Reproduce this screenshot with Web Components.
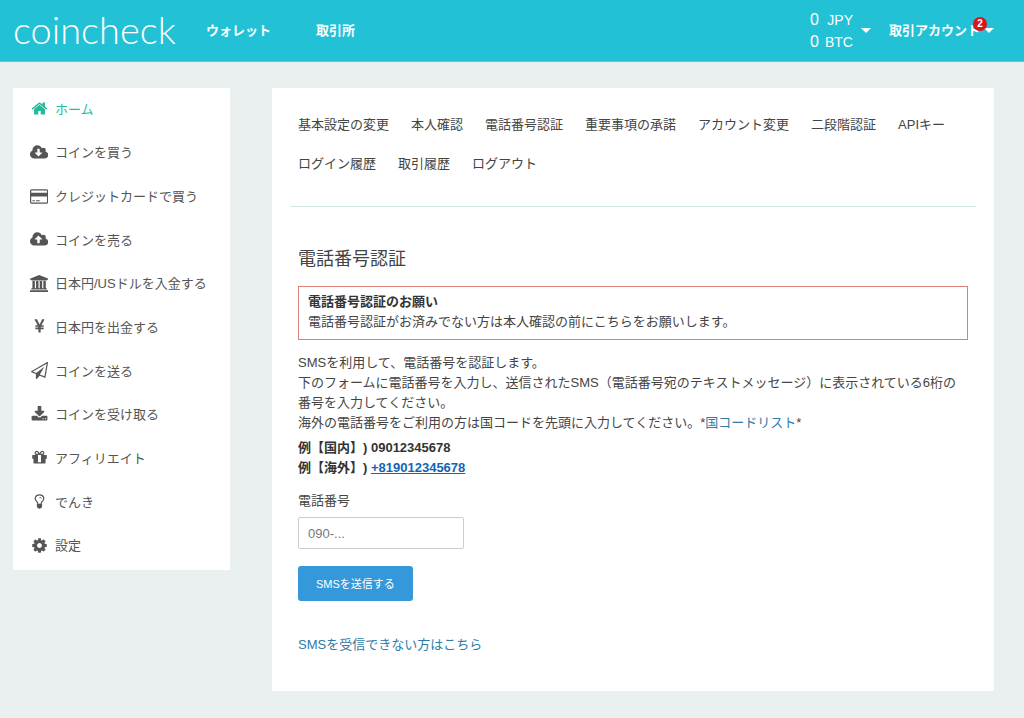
<!DOCTYPE html>
<html lang="ja">
<head>
<meta charset="utf-8">
<meta name="viewport" content="width=device-width, initial-scale=1">
<title>電話番号認証 | coincheck</title>
<style>
  *, *::before, *::after { box-sizing: border-box; }
  body {
    margin: 0;
    min-height: 100vh;
    background: #eaeff0;
    color: #444;
    font: 13px/20px "Liberation Sans", "Noto Sans CJK JP", sans-serif;
    text-spacing-trim: space-all;
  }
</style>
</head>
<body>
<cc-app>
  <cc-header slot="header">
    <cc-nav-link href="#wallet">ウォレット</cc-nav-link>
    <cc-nav-link href="#exchange">取引所</cc-nav-link>
    <cc-balance slot="tools"></cc-balance>
    <cc-account slot="tools" count="2">取引アカウント</cc-account>
  </cc-header>

  <cc-sidebar slot="sidebar">
    <cc-side-item icon="home" active>ホーム</cc-side-item>
    <cc-side-item icon="cloud-down">コインを買う</cc-side-item>
    <cc-side-item icon="card">クレジットカードで買う</cc-side-item>
    <cc-side-item icon="cloud-up">コインを売る</cc-side-item>
    <cc-side-item icon="bank">日本円/USドルを入金する</cc-side-item>
    <cc-side-item icon="yen">日本円を出金する</cc-side-item>
    <cc-side-item icon="plane">コインを送る</cc-side-item>
    <cc-side-item icon="download">コインを受け取る</cc-side-item>
    <cc-side-item icon="gift">アフィリエイト</cc-side-item>
    <cc-side-item icon="bulb">でんき</cc-side-item>
    <cc-side-item icon="cog">設定</cc-side-item>
  </cc-sidebar>

  <cc-panel>
    <cc-tabs slot="tabs"></cc-tabs>
    <span slot="title">電話番号認証</span>
    <cc-notice>
      <span slot="title">電話番号認証のお願い</span>
      電話番号認証がお済みでない方は本人確認の前にこちらをお願いします。
    </cc-notice>
    <cc-guide></cc-guide>
    <cc-phone-form></cc-phone-form>
  </cc-panel>
</cc-app>

<script>
  const ICONS = {
    "home": [1792, "M1472 992v480q0 26-19 45t-45 19h-384v-384h-256v384h-384q-26 0-45-19t-19-45v-480q0-1 .5-3t.5-3l575-474 575 474q1 2 1 6zm223-69l-62 74q-8 9-21 11h-3q-13 0-21-7l-692-577-692 577q-12 8-24 7-13-2-21-11l-62-74q-8-10-7-23.5t11-21.5l719-599q32-26 76-26t76 26l244 204v-195q0-14 9-23t23-9h192q14 0 23 9t9 23v408l219 182q10 8 11 21.5t-7 23.5z"],
    "cloud-down": [1920, "M1280 928q0-14-9-23t-23-9h-224v-352q0-13-9.5-22.5t-22.5-9.5h-192q-13 0-22.5 9.5t-9.5 22.5v352h-224q-13 0-22.5 9.5t-9.5 22.5q0 14 9 23l352 352q9 9 23 9t23-9l351-351q10-12 10-24zm640 224q0 159-112.5 271.5t-271.5 112.5h-1088q-185 0-316.5-131.5t-131.5-316.5q0-130 70-240t188-165q-2-30-2-43 0-212 150-362t362-150q156 0 285.5 87t188.5 231q71-62 166-62 106 0 181 75t75 181q0 76-41 138 130 31 213.5 135.5t83.5 238.5z"],
    "cloud-up": [1920, "M1280 864q0-14-9-23l-352-352q-9-9-23-9t-23 9l-351 351q-10 12-10 24 0 14 9 23t23 9h224v352q0 13 9.5 22.5t22.5 9.5h192q13 0 22.5-9.5t9.5-22.5v-352h224q13 0 22.5-9.5t9.5-22.5zm640 288q0 159-112.5 271.5t-271.5 112.5h-1088q-185 0-316.5-131.5t-131.5-316.5q0-130 70-240t188-165q-2-30-2-43 0-212 150-362t362-150q156 0 285.5 87t188.5 231q71-62 166-62 106 0 181 75t75 181q0 76-41 138 130 31 213.5 135.5t83.5 238.5z"],
    "card": [1920, "M1760 128q66 0 113 47t47 113v1216q0 66-47 113t-113 47h-1600q-66 0-113-47t-47-113v-1216q0-66 47-113t113-47h1600zm-1600 128q-13 0-22.5 9.5t-9.5 22.5v224h1664v-224q0-13-9.5-22.5t-22.5-9.5h-1600zm1600 1280q13 0 22.5-9.5t9.5-22.5v-608h-1664v608q0 13 9.5 22.5t22.5 9.5h1600zm-1504-128v-128h256v128h-256zm384 0v-128h384v128h-384z"],
    "bank": [1920, "M960 0l960 384v128h-128q0 26-20.5 45t-48.5 19h-1526q-28 0-48.5-19t-20.5-45h-128v-128zm-704 640h256v768h128v-768h256v768h128v-768h256v768h128v-768h256v768h59q28 0 48.5 19t20.5 45v64h-1664v-64q0-26 20.5-45t48.5-19h59v-768zm1595 960q28 0 48.5 19t20.5 45v128h-1920v-128q0-26 20.5-45t48.5-19h1782z"],
    "yen": [1792, "M985.5 1536h-172q-13 0-22.5-9t-9.5-23v-330h-288q-13 0-22.5-9t-9.5-23v-103q0-13 9.5-22.5t22.5-9.5h288v-85h-288q-13 0-22.5-9t-9.5-23v-104q0-13 9.5-22.5t22.5-9.5h214l-321-578q-8-16 0-32 10-16 28-16h194q19 0 29 18l215 425q19 38 56 125 10-24 30.5-68t27.5-61l191-420q8-19 29-19h191q17 0 27 16 9 14 1 31l-313 579h215q13 0 22.5 9.5t9.5 22.5v104q0 14-9.5 23t-22.5 9h-290v85h290q13 0 22.5 9.5t9.5 22.5v103q0 14-9.5 23t-22.5 9h-290v330q0 13-9.5 22.5t-22.5 9.5z"],
    "plane": [1792, "M1764 11q33 24 27 64l-256 1536q-5 29-32 45-14 8-31 8-11 0-24-5l-527-215-298 327q-18 21-47 21-14 0-23-4-19-7-30-23.5t-11-36.5v-452l-472-193q-37-14-40-55-3-39 32-59l1664-960q35-21 68 2zm-342 1499l221-1323-1434 827 336 137 863-639-478 797z"],
    "download": [1792, "M1344 1344q0-26-19-45t-45-19-45 19-19 45 19 45 45 19 45-19 19-45zm256 0q0-26-19-45t-45-19-45 19-19 45 19 45 45 19 45-19 19-45zm128-224v320q0 40-28 68t-68 28h-1472q-40 0-68-28t-28-68v-320q0-40 28-68t68-28h465l135 136q58 56 136 56t136-56l136-136h464q40 0 68 28t28 68zm-325-569q17 41-14 70l-448 448q-18 19-45 19t-45-19l-448-448q-31-29-14-70 17-39 59-39h256v-448q0-26 19-45t45-19h256q26 0 45 19t19 45v448h256q42 0 59 39z"],
    "gift": [1792, "M1056 1356v-716h-320v716q0 25 18 38.5t46 13.5h192q28 0 46-13.5t18-38.5zm-456-844h195l-126-161q-26-31-69-31-40 0-68 28t-28 68 28 68 68 28zm688-96q0-40-28-68t-68-28q-43 0-69 31l-125 161h194q40 0 68-28t28-68zm376 256v320q0 14-9 23t-23 9h-96v416q0 40-28 68t-68 28h-1088q-40 0-68-28t-28-68v-416h-96q-14 0-23-9t-9-23v-320q0-14 9-23t23-9h440q-93 0-158.5-65.5t-65.5-158.5 65.5-158.5 158.5-65.5q107 0 168 77l128 165 128-165q61-77 168-77 93 0 158.5 65.5t65.5 158.5-65.5 158.5-158.5 65.5h440q14 0 23 9t9 23z"],
    "bulb": [1792, "M1120 576q0 13-9.5 22.5t-22.5 9.5-22.5-9.5-9.5-22.5q0-46-54-71t-106-25q-13 0-22.5-9.5t-9.5-22.5 9.5-22.5 22.5-9.5q50 0 99.5 16t87 54 37.5 90zm160 0q0-72-34.5-134t-90-101.5-123-62-136.5-22.5-136.5 22.5-123 62-90 101.5-34.5 134q0 101 68 180 10 11 30.5 33t30.5 33q128 153 141 298h228q13-145 141-298 10-11 30.5-33t30.5-33q68-79 68-180zm128 0q0 155-103 268-45 49-74.5 87t-59.5 95.5-34 107.5q47 28 47 82 0 37-25 64 25 27 25 64 0 52-45 81 13 23 13 47 0 46-31.5 71t-77.5 25q-20 44-60 70t-87 26-87-26-60-70q-46 0-77.5-25t-31.5-71q0-24 13-47-45-29-45-81 0-37 25-64-25-27-25-64 0-54 47-82-4-50-34-107.5t-59.5-95.5-74.5-87q-103-113-103-268 0-99 44.5-184.5t117-142 164-89 186.5-32.5 186.5 32.5 164 89 117 142 44.5 184.5z"],
    "cog": [1792, "M1152 896q0-106-75-181t-181-75-181 75-75 181 75 181 181 75 181-75 75-181zm512-109v222q0 12-8 23t-20 13l-185 28q-19 54-39 91 35 50 107 138 10 12 10 25t-9 23q-27 37-99 108t-94 71q-12 0-26-9l-138-108q-44 23-91 38-16 136-29 186-7 28-36 28h-222q-14 0-24.5-8.5t-11.5-21.5l-28-184q-49-16-90-37l-141 107q-10 9-25 9-14 0-25-11-126-114-165-168-7-10-7-23 0-12 8-23 15-21 51-66.5t54-70.5q-27-50-41-99l-183-27q-13-2-21-12.5t-8-23.5v-222q0-12 8-23t19-13l186-28q14-46 39-92-40-57-107-138-10-12-10-24 0-10 9-23 26-36 98.5-107.5t94.5-71.5q13 0 26 10l138 107q44-23 91-38 16-136 29-186 7-28 36-28h222q14 0 24.5 8.5t11.5 21.5l28 184q49 16 90 37l142-107q9-9 24-9 13 0 25 10 129 119 165 170 7 8 7 22 0 12-8 23-15 21-51 66.5t-54 70.5q26 50 41 98l183 28q13 2 21 12.5t8 23.5z"]
  };

  const BASE = `
    *, *::before, *::after { box-sizing: border-box; }
    a { color: #2f7ba8; text-decoration: none; }
    a:hover { text-decoration: underline; }
    button, input { font: inherit; }
  `;

  function define(name, render) {
    customElements.define(name, class extends HTMLElement {
      connectedCallback() {
        if (this.shadowRoot) return;
        this.attachShadow({ mode: "open" }).innerHTML = `<style>${BASE}</style>` + render(this);
      }
    });
  }

  define("cc-app", () => `
    <style>
      :host { display: block; }
      .layout {
        display: grid;
        grid-template-columns: 217px minmax(0, 1fr);
        column-gap: 42px;
        align-items: start;
        padding: 26px 30px 27px 13px;
      }
      @media (max-width: 720px) { .layout { grid-template-columns: 1fr; row-gap: 24px; padding-right: 13px; } }
    </style>
    <slot name="header"></slot>
    <div class="layout">
      <slot name="sidebar"></slot>
      <main><slot></slot></main>
    </div>`);

  define("cc-header", () => `
    <style>
      :host { display: block; background: #23c1d5; border-bottom: 1px solid #58c9d6; color: #fff; }
      header { display: flex; align-items: center; min-height: 61px; padding: 0 30px 0 13px; }
      .logo { color: #fff; font: 300 38px/48px Lato, sans-serif; width: 193px; margin-top: -4px; }
      .logo:hover { text-decoration: none; }
      nav { display: flex; gap: 45px; }
      .tools { display: flex; align-items: center; gap: 18px; margin-left: auto; }
    </style>
    <header>
      <a class="logo" href="#top">coincheck</a>
      <nav><slot></slot></nav>
      <div class="tools"><slot name="tools"></slot></div>
    </header>`);

  define("cc-nav-link", el => `
    <style>
      :host { display: block; }
      a { color: #fff; font-weight: 700; }
    </style>
    <a href="${el.getAttribute("href")}"><slot></slot></a>`);

  const CARET = `
    .caret { border: 5px solid transparent; border-top-color: #fff; border-bottom: 0; }
    button { display: flex; align-items: center; border: 0; padding: 0; background: none; color: #fff; cursor: pointer; }
  `;

  define("cc-balance", () => `
    <style>
      :host { display: block; }
      ${CARET}
      button { gap: 8px; }
      .rows { display: grid; grid-template-columns: auto auto; column-gap: 6px; font-size: 14px; line-height: 22px; text-align: right; }
      .amount { font-size: 16px; }
    </style>
    <button type="button" aria-haspopup="true">
      <span class="rows">
        <span class="amount">0</span><span>JPY</span>
        <span class="amount">0</span><span>BTC</span>
      </span>
      <span class="caret"></span>
    </button>`);

  define("cc-account", el => `
    <style>
      :host { display: block; }
      ${CARET}
      button { position: relative; gap: 4px; font-weight: 700; }
      .badge {
        position: absolute; top: -4px; right: 7px;
        width: 14px; height: 14px; border-radius: 50%;
        background: #d9141e; font-size: 10px; line-height: 14px; text-align: center;
      }
    </style>
    <button type="button" aria-haspopup="true">
      <slot></slot>
      <span class="caret"></span>
      <span class="badge">${el.getAttribute("count")}</span>
    </button>`);

  define("cc-icon", el => {
    const [width, path] = ICONS[el.getAttribute("name")];
    return `
      <style>
        :host { display: flex; justify-content: center; width: 18px; margin-top: -2px; }
        svg { display: block; flex: none; height: 17px; fill: currentColor; }
      </style>
      <svg viewBox="0 0 ${width} 1792" aria-hidden="true"><path fill-rule="evenodd" d="${path}"/></svg>`;
  });

  define("cc-sidebar", () => `
    <style>
      :host { display: block; background: #fff; }
      nav { display: grid; grid-auto-rows: 1fr; min-height: 482px; padding-bottom: 2px; }
    </style>
    <nav><slot></slot></nav>`);

  define("cc-side-item", el => `
    <style>
      :host { display: flex; }
      a { flex: 1; display: flex; align-items: center; gap: 7px; padding: 0 17px; color: #555; }
      :host([active]) a { color: #26b99a; }
      a:hover { color: #26b99a; text-decoration: none; }
    </style>
    <a href="#${el.getAttribute("icon")}"><cc-icon name="${el.getAttribute("icon")}"></cc-icon><span><slot></slot></span></a>`);

  define("cc-panel", () => `
    <style>
      :host { display: block; background: #fff; padding: 17px 18px 36px; }
      hr { margin: 23px 0 41px; border: 0; border-top: 1px solid #cfe8e4; }
      .body { padding: 0 8px; }
      h1 { margin: 0 0 16px; font-size: 18px; line-height: 22px; font-weight: 400; }
    </style>
    <slot name="tabs"></slot>
    <hr>
    <div class="body">
      <h1><slot name="title"></slot></h1>
      <slot></slot>
    </div>`);

  define("cc-tabs", () => `
    <style>
      :host { display: block; padding: 0 8px; }
      nav { display: flex; flex-wrap: wrap; column-gap: 22px; }
      a { color: #444; line-height: 39px; }
    </style>
    <nav>${["基本設定の変更", "本人確認", "電話番号認証", "重要事項の承諾", "アカウント変更", "二段階認証", "APIキー", "ログイン履歴", "取引履歴", "ログアウト"]
      .map((label, i) => `<a href="#tab-${i + 1}">${label}</a>`).join("")}</nav>`);

  define("cc-notice", () => `
    <style>
      :host { display: block; border: 1px solid #d9827b; padding: 5px 9px 7px; }
      strong { display: block; color: #333; }
    </style>
    <strong><slot name="title"></slot></strong>
    <slot></slot>`);

  define("cc-guide", () => `
    <style>
      :host { display: block; margin-top: 13px; }
      p { margin: 0 0 5px; }
      .examples { margin: 0; color: #333; font-weight: 700; }
      .examples a { color: #1464b4; text-decoration: underline; }
    </style>
    <p>SMSを利用して、電話番号を認証します。<br>下のフォームに電話番号を入力し、送信されたSMS（電話番号宛のテキストメッセージ）に表示されている6桁の番号を入力してください。<br>海外の電話番号をご利用の方は国コードを先頭に入力してください。*<a href="#codes">国コードリスト</a>*</p>
    <p class="examples">例【国内】) 09012345678<br>例【海外】) <a href="tel:+819012345678">+819012345678</a></p>`);

  define("cc-phone-form", () => `
    <style>
      :host { display: block; margin-top: 13px; }
      form { display: flex; flex-direction: column; align-items: flex-start; }
      label { margin-bottom: 6px; }
      input { width: 166px; height: 32px; padding: 0 9px; border: 1px solid #ccc; border-radius: 2px; background: #fff; color: #444; }
      input::placeholder { color: #777; opacity: 1; }
      button { margin: 17px 0 34px; height: 35px; padding: 0 18px; border: 0; border-radius: 3px; background: #3498db; color: #fff; font-size: 11px; cursor: pointer; }
    </style>
    <form>
      <label for="phone">電話番号</label>
      <input id="phone" type="tel" placeholder="090-...">
      <button type="button">SMSを送信する</button>
      <a href="#help">SMSを受信できない方はこちら</a>
    </form>`);
</script>
</body>
</html>
